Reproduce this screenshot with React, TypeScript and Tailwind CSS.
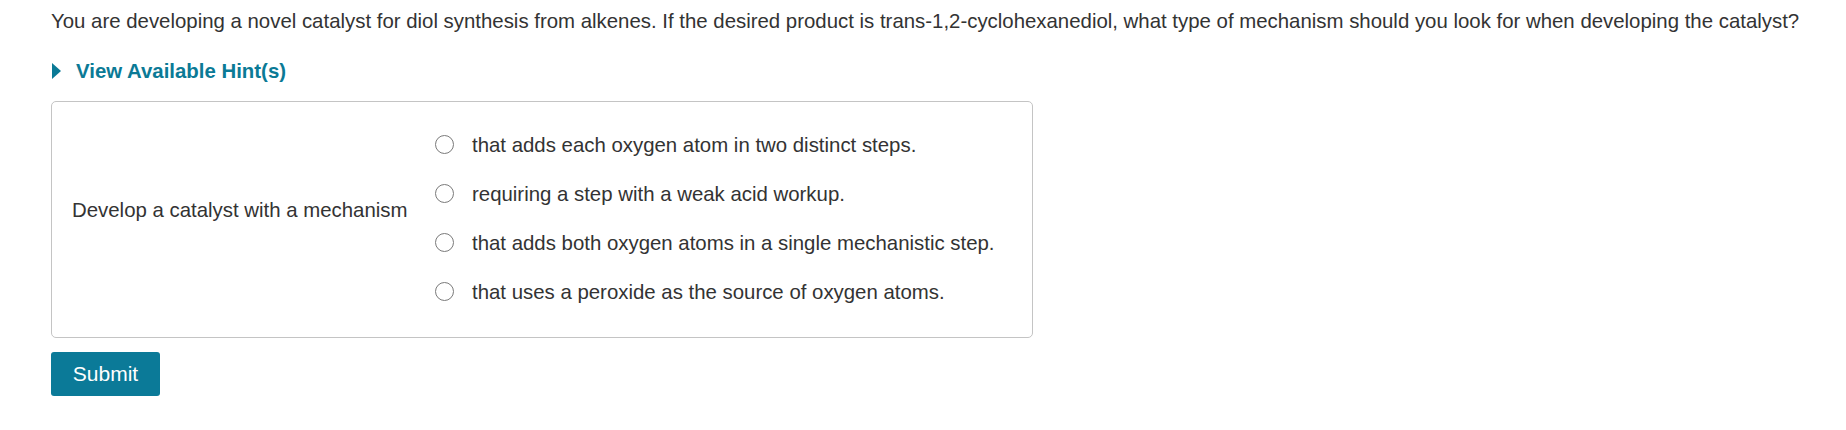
const options = [
  'that adds each oxygen atom in two distinct steps.',
  'requiring a step with a weak acid workup.',
  'that adds both oxygen atoms in a single mechanistic step.',
  'that uses a peroxide as the source of oxygen atoms.',
]

export default function App() {
  return (
    <div className="min-h-[430px] bg-white px-[51px] pt-[8px] font-['Liberation_Sans',Arial,sans-serif] text-[20.4px] text-[#333333]">
      <p className="whitespace-nowrap leading-[26px]">
        You are developing a novel catalyst for diol synthesis from alkenes. If the desired product is
        trans-1,2-cyclohexanediol, what type of mechanism should you look for when developing the catalyst?
      </p>

      <div className="mt-[24px] flex items-center gap-[15px]">
        <svg width="9" height="16" viewBox="0 0 9 16" className="ml-[1px]">
          <path d="M0 0 L9 8 L0 16 Z" fill="#0b7a96" />
        </svg>
        <span className="font-bold leading-[26px] text-[#0b7a96]">View Available Hint(s)</span>
      </div>

      <div className="mt-[17px] flex w-[982px] items-center rounded-[5px] border border-[#c4c4c4] pt-[18px] pb-[21px]">
        <div className="w-[383px] shrink-0 pb-[16px] pl-5 leading-[26px]">Develop a catalyst with a mechanism</div>
        <div className="flex flex-col">
          {options.map((opt) => (
            <label key={opt} className="flex h-[49px] items-center gap-[18px]">
              <span className="h-[19px] w-[19px] shrink-0 rounded-full border border-[#7a7a7a] bg-white" />
              <span className="leading-[26px]">{opt}</span>
            </label>
          ))}
        </div>
      </div>

      <button className="mt-[14px] h-[44px] w-[109px] rounded-[3px] bg-[#0b7a98] text-[21px] text-white">
        Submit
      </button>
    </div>
  )
}
